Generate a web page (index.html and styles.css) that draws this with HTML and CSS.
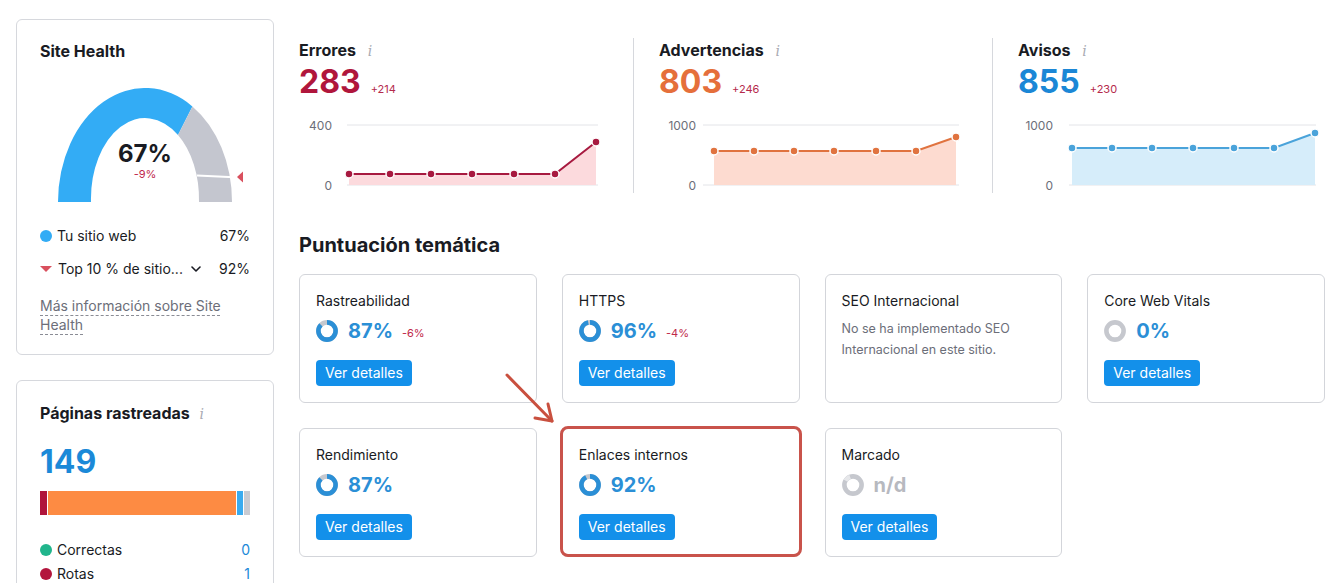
FILE: index.html
```html
<!DOCTYPE html>
<html lang="es">
<head>
<meta charset="utf-8">
<title>Site Audit</title>
<link rel="stylesheet" href="styles.css">
</head>
<body>
<div class="page">
  <aside class="side">
    <section class="card health">
      <h2 class="card-title">Site Health</h2>
      <div class="gauge">
        <svg width="190" height="114" viewBox="0 0 190 114">
          <path d="M1,114 A87,114 0 0 1 135.4,18.4 L121,47 A54,81 0 0 0 34,114 Z" fill="#33acf5"/>
          <path d="M135.4,18.4 A87,114 0 0 1 175,114 L142,114 A54,81 0 0 0 121,47 Z" fill="#c4c6cf"/>
          <line x1="140" y1="87.6" x2="177" y2="89.2" stroke="#fff" stroke-width="2"/>
          <path d="M180,89 L186,83.5 L186,94.5 Z" fill="#d9505e"/>
          <text x="88" y="74" text-anchor="middle" class="g-val">67%</text>
          <text x="88" y="90" text-anchor="middle" class="g-delta">-9%</text>
        </svg>
      </div>
      <ul class="legend">
        <li><span class="dot dot-blue"></span><span class="lbl">Tu sitio web</span><span class="val">67%</span></li>
        <li><span class="tri"></span><span class="lbl lbl-top">Top 10 % de sitio...</span><svg class="chev" width="10" height="6" viewBox="0 0 10 6"><path d="M1,1 L5,5 L9,1" fill="none" stroke="#191b23" stroke-width="1.6" stroke-linecap="round" stroke-linejoin="round"/></svg><span class="val">92%</span></li>
      </ul>
      <a class="more" href="#">Más información sobre Site Health</a>
    </section>

    <section class="card pages">
      <h2 class="card-title">Páginas rastreadas <i class="info">i</i></h2>
      <div class="pages-num">149</div>
      <div class="bar">
        <span class="seg seg-red"></span><span class="seg seg-orange"></span><span class="seg seg-blue"></span><span class="seg seg-gray"></span>
      </div>
      <ul class="legend legend-pages">
        <li><span class="dot dot-green"></span><span class="lbl">Correctas</span><span class="val val-link">0</span></li>
        <li><span class="dot dot-red"></span><span class="lbl">Rotas</span><span class="val val-link">1</span></li>
      </ul>
    </section>
  </aside>

  <main class="main">
    <div class="metrics">
      <div class="metric">
        <div class="m-head">Errores <i class="info">i</i></div>
        <div class="m-val"><span class="num num-red">283</span><span class="delta">+214</span></div>
        <svg class="chart" width="300" height="80" viewBox="0 0 300 80">
          <line x1="48" y1="12" x2="299" y2="12" class="grid-line"/>
          <line x1="48" y1="72" x2="299" y2="72" class="grid-line"/>
          <text x="33" y="16.5" text-anchor="end" class="axis">400</text>
          <text x="33" y="76.5" text-anchor="end" class="axis">0</text>
          <polygon points="50,61 91,61 132,61 173,61 215,61 256,61 297,29 297,72 50,72" fill="#fcdadd"/>
          <polyline points="50,61 91,61 132,61 173,61 215,61 256,61 297,29" fill="none" stroke="#a71a40" stroke-width="2"/>
          <g fill="#a71a40" stroke="#fff" stroke-width="1.5">
            <circle cx="50" cy="61" r="4"/><circle cx="91" cy="61" r="4"/><circle cx="132" cy="61" r="4"/><circle cx="173" cy="61" r="4"/><circle cx="215" cy="61" r="4"/><circle cx="256" cy="61" r="4"/><circle cx="297" cy="29" r="4"/>
          </g>
        </svg>
      </div>
      <div class="metric">
        <div class="m-head">Advertencias <i class="info">i</i></div>
        <div class="m-val"><span class="num num-orange">803</span><span class="delta">+246</span></div>
        <svg class="chart" width="300" height="80" viewBox="0 0 300 80">
          <line x1="44" y1="12" x2="300" y2="12" class="grid-line"/>
          <line x1="44" y1="72" x2="300" y2="72" class="grid-line"/>
          <text x="37" y="16.5" text-anchor="end" class="axis">1000</text>
          <text x="37" y="76.5" text-anchor="end" class="axis">0</text>
          <polygon points="55,38 95,38 135,38 175,38 217,38 257,38 297,24 297,72 55,72" fill="#fddbd0"/>
          <polyline points="55,38 95,38 135,38 175,38 217,38 257,38 297,24" fill="none" stroke="#e0733f" stroke-width="2"/>
          <g fill="#e0733f" stroke="#fff" stroke-width="1.5">
            <circle cx="55" cy="38" r="4"/><circle cx="95" cy="38" r="4"/><circle cx="135" cy="38" r="4"/><circle cx="175" cy="38" r="4"/><circle cx="217" cy="38" r="4"/><circle cx="257" cy="38" r="4"/><circle cx="297" cy="24" r="4"/>
          </g>
        </svg>
      </div>
      <div class="metric">
        <div class="m-head">Avisos <i class="info">i</i></div>
        <div class="m-val"><span class="num num-blue">855</span><span class="delta">+230</span></div>
        <svg class="chart" width="300" height="80" viewBox="0 0 300 80">
          <line x1="51" y1="12" x2="298" y2="12" class="grid-line"/>
          <line x1="51" y1="72" x2="298" y2="72" class="grid-line"/>
          <text x="35" y="16.5" text-anchor="end" class="axis">1000</text>
          <text x="35" y="76.5" text-anchor="end" class="axis">0</text>
          <polygon points="54,35 94,35 134,35 175,35 216,35 256,35 297,20 297,72 54,72" fill="#d6edfa"/>
          <polyline points="54,35 94,35 134,35 175,35 216,35 256,35 297,20" fill="none" stroke="#4aa3da" stroke-width="2"/>
          <g fill="#4aa3da" stroke="#fff" stroke-width="1.5">
            <circle cx="54" cy="35" r="4"/><circle cx="94" cy="35" r="4"/><circle cx="134" cy="35" r="4"/><circle cx="175" cy="35" r="4"/><circle cx="216" cy="35" r="4"/><circle cx="256" cy="35" r="4"/><circle cx="297" cy="20" r="4"/>
          </g>
        </svg>
      </div>
    </div>

    <h2 class="section-title">Puntuación temática</h2>

    <div class="themes">
      <div class="theme">
        <div class="t-title">Rastreabilidad</div>
        <div class="score">
          <svg class="donut" width="22" height="22" viewBox="0 0 22 22"><circle cx="11" cy="11" r="8.6" class="ring-bg"/><circle cx="11" cy="11" r="8.6" class="ring-fg" stroke-dasharray="47 54" transform="rotate(-90 11 11)"/></svg>
          <span class="pct">87%</span><span class="t-delta">-6%</span>
        </div>
        <a class="btn" href="#">Ver detalles</a>
      </div>
      <div class="theme">
        <div class="t-title">HTTPS</div>
        <div class="score">
          <svg class="donut" width="22" height="22" viewBox="0 0 22 22"><circle cx="11" cy="11" r="8.6" class="ring-bg"/><circle cx="11" cy="11" r="8.6" class="ring-fg" stroke-dasharray="51.9 54" transform="rotate(-90 11 11)"/></svg>
          <span class="pct">96%</span><span class="t-delta">-4%</span>
        </div>
        <a class="btn" href="#">Ver detalles</a>
      </div>
      <div class="theme">
        <div class="t-title">SEO Internacional</div>
        <p class="t-desc">No se ha implementado SEO Internacional en este sitio.</p>
      </div>
      <div class="theme">
        <div class="t-title">Core Web Vitals</div>
        <div class="score">
          <svg class="donut" width="22" height="22" viewBox="0 0 22 22"><circle cx="11" cy="11" r="8.6" class="ring-bg"/></svg>
          <span class="pct">0%</span>
        </div>
        <a class="btn" href="#">Ver detalles</a>
      </div>
      <div class="theme">
        <div class="t-title">Rendimiento</div>
        <div class="score">
          <svg class="donut" width="22" height="22" viewBox="0 0 22 22"><circle cx="11" cy="11" r="8.6" class="ring-bg"/><circle cx="11" cy="11" r="8.6" class="ring-fg" stroke-dasharray="47 54" transform="rotate(-90 11 11)"/></svg>
          <span class="pct">87%</span>
        </div>
        <a class="btn" href="#">Ver detalles</a>
      </div>
      <div class="theme theme-hl">
        <div class="t-title">Enlaces internos</div>
        <div class="score">
          <svg class="donut" width="22" height="22" viewBox="0 0 22 22"><circle cx="11" cy="11" r="8.6" class="ring-bg"/><circle cx="11" cy="11" r="8.6" class="ring-fg" stroke-dasharray="49.7 54" transform="rotate(-90 11 11)"/></svg>
          <span class="pct">92%</span>
        </div>
        <a class="btn" href="#">Ver detalles</a>
      </div>
      <div class="theme">
        <div class="t-title">Marcado</div>
        <div class="score">
          <svg class="donut" width="22" height="22" viewBox="0 0 22 22"><circle cx="11" cy="11" r="8.6" class="ring-bg"/><circle cx="11" cy="11" r="8.6" class="ring-light" stroke-dasharray="6 54" transform="rotate(-150 11 11)"/></svg>
          <span class="pct pct-na">n/d</span>
        </div>
        <a class="btn" href="#">Ver detalles</a>
      </div>
    </div>
  </main>
</div>

<svg class="arrow" width="60" height="60" viewBox="0 0 60 60">
  <g fill="none" stroke="#c9503f" stroke-width="3" stroke-linecap="round" stroke-linejoin="round">
    <line x1="7" y1="7" x2="52" y2="53"/>
    <polyline points="48,36 52,53 35,50"/>
  </g>
</svg>
</body>
</html>
```

FILE: styles.css
```css
html { overflow: hidden; }
* { box-sizing: border-box; }
body {
  margin: 0;
  background: #fff;
  font-family: Inter, "Noto Sans", "Liberation Sans", sans-serif;
  color: #191b23;
  position: relative;
}
ul { list-style: none; margin: 0; padding: 0; }
a { text-decoration: none; }

.page {
  display: flex;
  gap: 25px;
  padding: 19px 19px 0 16px;
}

/* left column */
.side {
  width: 258px;
  flex: none;
  display: flex;
  flex-direction: column;
  gap: 25px;
}
.card {
  border: 1px solid #d6d8dd;
  border-radius: 6px;
  padding: 21px 23px 20px 23px;
}
.card-title {
  margin: 0;
  font-size: 16px;
  line-height: 20px;
  font-weight: 700;
}
.info {
  font-family: "DejaVu Serif", "Liberation Serif", serif;
  font-style: italic;
  font-weight: 400;
  font-size: 14px;
  color: #a9abb3;
  margin-left: 6px;
}

.gauge {
  margin: 27px 0 0 17px;
  height: 114px;
}
.gauge svg { display: block; }
.g-val { font-family: Inter, sans-serif; font-size: 24px; font-weight: 700; fill: #191b23; }
.g-delta { font-family: Inter, sans-serif; font-size: 11px; fill: #c0294b; }

.legend { margin-top: 24px; display: flex; flex-direction: column; gap: 13px; }
.legend li {
  display: flex;
  align-items: center;
  font-size: 14px;
  line-height: 20px;
}
.legend .lbl { flex: 1; }
.legend .val { text-align: right; }
.dot {
  width: 12px;
  height: 12px;
  border-radius: 50%;
  margin-right: 5px;
  flex: none;
}
.dot-blue { background: #33acf5; }
.dot-green { background: #21b58c; }
.dot-red { background: #b3153d; }
.tri {
  width: 0;
  height: 0;
  border-left: 6.5px solid transparent;
  border-right: 6.5px solid transparent;
  border-top: 6px solid #d9505e;
  margin-right: 6px;
  flex: none;
}
.chev { margin-right: 18px; flex: none; }

.more {
  display: block;
  margin-top: 17px;
  font-size: 14px;
  line-height: 19px;
  color: #6c6e79;
  text-decoration: underline dashed #8a8c95;
  text-decoration-thickness: 1px;
  text-underline-offset: 4px;
}

.pages { padding-top: 22px; padding-bottom: 30px; }
.pages-num {
  margin-top: 20px;
  font-size: 32px;
  line-height: 36px;
  font-weight: 700;
  color: #1b89d8;
}
.bar {
  margin-top: 11px;
  height: 24px;
  display: flex;
  gap: 1px;
}
.seg { height: 100%; }
.seg-red { width: 7px; background: #b0153b; }
.seg-orange { flex: 1; background: #fd8b43; }
.seg-blue { width: 6px; background: #3aabef; }
.seg-gray { width: 6px; background: #c9cbd2; }
.legend-pages { margin-top: 23px; gap: 0; }
.legend-pages li { line-height: 24px; }
.val-link { color: #1b89d8; }

/* main */
.main {
  flex: 1;
  min-width: 0;
  padding-top: 19px;
}
.metrics {
  display: grid;
  grid-template-columns: 334px 359px 1fr;
}
.metric {
  height: 155px;
  padding: 2px 34px 0 25px;
  border-left: 1px solid #d6d8dd;
}
.metric:first-child { border-left: 0; padding-left: 0; }
.metric:last-child { padding-right: 0; }
.m-head {
  font-size: 16px;
  line-height: 20px;
  font-weight: 700;
}
.m-head .info { margin-left: 8px; }
.m-val {
  margin-top: 3px;
  height: 36px;
  display: flex;
  align-items: baseline;
}
.num { font-size: 32px; font-weight: 700; line-height: 36px; }
.num-red { color: #b0163c; }
.num-orange { color: #e56f3b; }
.num-blue { color: #1b87d6; }
.delta { font-size: 11px; line-height: 11px; color: #b52a4c; margin-left: 10px; }
.chart { display: block; margin-top: 13px; overflow: visible; }
.grid-line { stroke: #e3e4e8; stroke-width: 1; }
.axis { font-family: Inter, sans-serif; font-size: 12px; fill: #6c6e79; }

.section-title {
  margin: 40px 0 0;
  font-size: 20px;
  line-height: 24px;
  font-weight: 700;
}

.themes {
  margin-top: 17px;
  display: grid;
  grid-template-columns: repeat(4, 1fr);
  gap: 25px;
}
.theme {
  height: 129px;
  border: 1px solid #d3d5da;
  border-radius: 6px;
  padding: 16px;
  position: relative;
}
.theme-hl::after {
  content: "";
  position: absolute;
  top: -3px;
  left: -3px;
  right: -3px;
  bottom: -1px;
  border: 3px solid #c9534b;
  border-radius: 8px;
}
.t-title { font-size: 14px; line-height: 20px; }
.t-desc {
  margin: 7px 0 0;
  font-size: 12.5px;
  line-height: 21px;
  color: #6c6e79;
}
.score {
  margin-top: 8px;
  height: 24px;
  display: flex;
  align-items: center;
}
.donut { flex: none; margin-right: 10px; }
.ring-bg { fill: none; stroke: #c6c8ce; stroke-width: 4.6; }
.ring-fg { fill: none; stroke: #2b8fd6; stroke-width: 4.6; }
.ring-light { fill: none; stroke: #e6e7ea; stroke-width: 4.6; }
.pct { font-size: 20px; font-weight: 700; color: #2b8fd6; line-height: 24px; }
.pct-na { color: #b7b9bf; }
.t-delta { font-size: 11px; color: #c0294b; margin-left: 9px; margin-top: 4px; }
.btn {
  display: inline-block;
  margin-top: 17px;
  height: 26px;
  line-height: 26px;
  padding: 0 9px;
  border-radius: 4px;
  background: #1390ea;
  color: #fff;
  font-size: 14px;
}

.arrow {
  position: absolute;
  left: 500px;
  top: 368px;
}
```
